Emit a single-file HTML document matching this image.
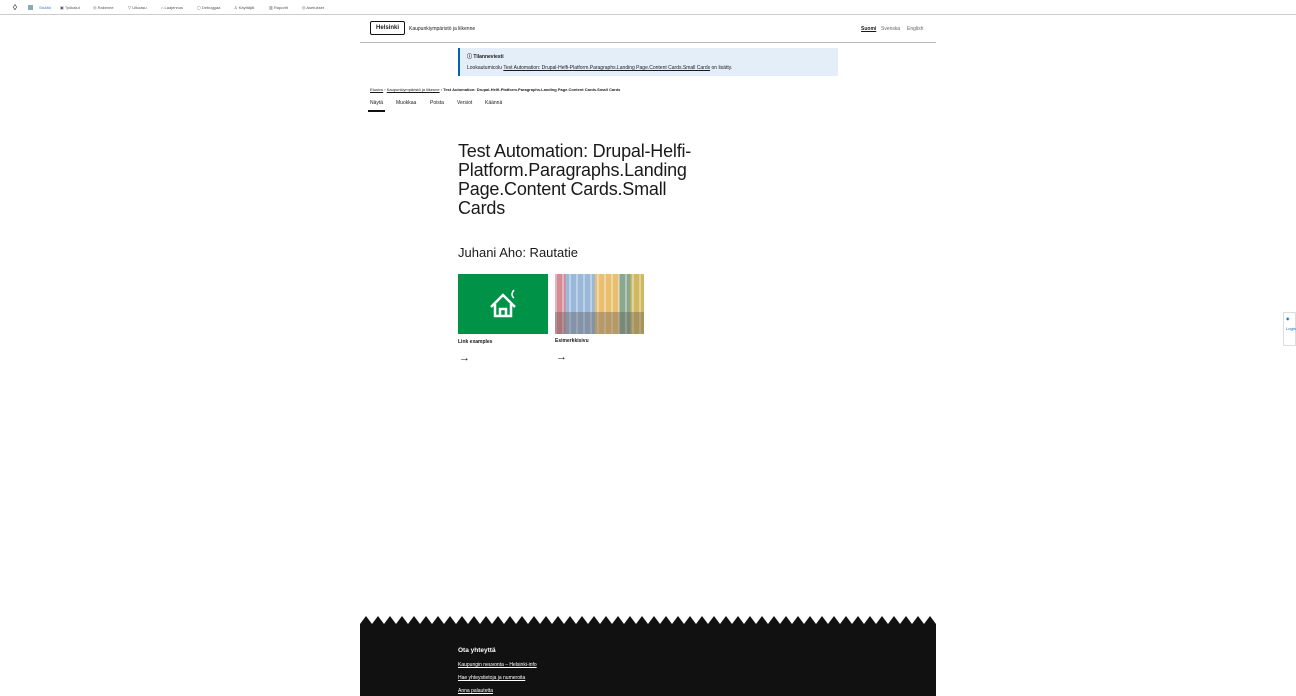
<!DOCTYPE html>
<html><head><meta charset="utf-8"><style>
*{margin:0;padding:0;box-sizing:border-box}
body{width:1296px;height:696px;overflow:hidden;background:#fff;font-family:"Liberation Sans",sans-serif;color:#1a1a1a;position:relative}
.tb{position:absolute;left:0;top:0;width:1296px;height:15px;border-bottom:1px solid #ccc;font-size:4px;color:#555}
.tb span{position:absolute;top:5px}
.hdr{position:absolute;left:360px;top:15px;width:576px;height:28px;border-bottom:1px solid #bbb}
.logo{position:absolute;left:10px;top:6px;width:35px;height:14px;border:1.3px solid #111;border-radius:2px;font-size:6px;font-weight:bold;text-align:center;line-height:12px}
.a{position:absolute;font-size:5px}
.msg{position:absolute;left:458px;top:48px;width:380px;height:28px;background:#e4eef8;border-left:2px solid #0062b9}
u{text-decoration:underline}
h1{position:absolute;left:458px;top:142px;width:255px;font-size:18px;font-weight:normal;line-height:19px;letter-spacing:-0.2px}
h2{position:absolute;left:458px;top:245px;font-size:13px;font-weight:normal}
.ft{position:absolute;left:360px;top:626px;width:576px;height:70px;background:#111}
.ft .a{color:#fff}
</style></head><body>
<div class="tb">
<span style="left:13px;top:3px;font-size:8px;color:#000">◊</span>
<span style="left:28px;width:5px;height:5px;background:#8ab;top:5px"></span>
<span style="left:39px;color:#4a7bd0">Sisältö</span>
<span style="left:60px">▣ Työkalut</span><span style="left:93px">◎ Rakenne</span><span style="left:128px">▽ Ulkoasu</span><span style="left:161px">⌂ Laajennus</span><span style="left:197px">▢ Debuggaa</span><span style="left:234px">♙ Käyttäjät</span><span style="left:269px">▥ Raportit</span><span style="left:302px">◎ Asetukset</span>
</div>
<div class="hdr">
<div class="logo">Helsinki</div>
<div class="a" style="left:49px;top:11px">Kaupunkiympäristö ja liikenne</div>
<div class="a" style="left:501px;top:11px;font-weight:bold;text-decoration:underline">Suomi</div>
<div class="a" style="left:521px;top:11px;color:#666">Svenska</div>
<div class="a" style="left:547px;top:11px;color:#666">English</div>
</div>
<div class="msg">
<div class="a" style="left:7px;top:5px;font-weight:bold">ⓘ Tilanneviesti</div>
<div class="a" style="left:7px;top:17px">Lookautumicolu <u>Test Automation: Drupal-Helfi-Platform.Paragraphs.Landing Page.Content Cards.Small Cards</u> on lisätty.</div>
</div>
<div class="a" style="left:370px;top:87px;font-size:4px"><u>Etusivu</u> › <u>Kaupunkiympäristö ja liikenne</u> › <b>Test Automation: Drupal-Helfi-Platform.Paragraphs.Landing Page.Content Cards.Small Cards</b></div>
<div class="a" style="left:370px;top:100px">Näytä</div>
<div style="position:absolute;left:368px;top:110px;width:17px;height:2px;background:#111"></div>
<div class="a" style="left:396px;top:100px">Muokkaa</div>
<div class="a" style="left:430px;top:100px">Poista</div>
<div class="a" style="left:457px;top:100px">Versiot</div>
<div class="a" style="left:485px;top:100px">Käännä</div>
<h1>Test Automation: Drupal-Helfi-Platform.Paragraphs.Landing Page.Content Cards.Small Cards</h1>
<h2>Juhani Aho: Rautatie</h2>
<div style="position:absolute;left:458px;top:274px;width:90px;height:60px;background:#009246">
<svg width="90" height="60"><g fill="none" stroke="#fff" stroke-width="2.5"><path d="M33 33 L45 21 L57 33"/><path d="M37 30 V42 H53 V30"/><path d="M42 42 V35 H48 V42"/><path d="M56 16 Q52 21 56 24" stroke-width="1.5"/></g></svg></div>
<div style="position:absolute;left:555px;top:274px;width:89px;height:60px;background:linear-gradient(90deg,#d68a96 0 12%,#9ab8d8 12% 45%,#e8c070 45% 72%,#8aa890 72% 85%,#d0b860 85%)">
<div style="position:absolute;left:0;top:0;width:89px;height:60px;background:repeating-linear-gradient(90deg,rgba(255,255,255,.35) 0 2px,transparent 2px 7px)"></div>
<div style="position:absolute;left:0;top:38px;width:89px;height:22px;background:rgba(90,80,80,.35)"></div></div>
<div class="a" style="left:458px;top:339px;font-weight:bold">Link examples</div>
<div class="a" style="left:555px;top:338px;font-weight:bold">Esimerkkisivu</div>
<div style="position:absolute;left:459px;top:352px;font-size:11px">→</div>
<div style="position:absolute;left:556px;top:351px;font-size:11px">→</div>
<div style="position:absolute;left:1283px;top:312px;width:13px;height:34px;border:1px solid #ddd;background:#fff;font-size:4px;color:#0062b9;padding-top:3px;padding-left:2px">◉<br><br>Login</div>
<svg style="position:absolute;left:360px;top:614px" width="576" height="13"><path d="M0 13 L0 10 L6 2 L12 10 L18 2 L24 10 L30 2 L36 10 L42 2 L48 10 L54 2 L60 10 L66 2 L72 10 L78 2 L84 10 L90 2 L96 10 L102 2 L108 10 L114 2 L120 10 L126 2 L132 10 L138 2 L144 10 L150 2 L156 10 L162 2 L168 10 L174 2 L180 10 L186 2 L192 10 L198 2 L204 10 L210 2 L216 10 L222 2 L228 10 L234 2 L240 10 L246 2 L252 10 L258 2 L264 10 L270 2 L276 10 L282 2 L288 10 L294 2 L300 10 L306 2 L312 10 L318 2 L324 10 L330 2 L336 10 L342 2 L348 10 L354 2 L360 10 L366 2 L372 10 L378 2 L384 10 L390 2 L396 10 L402 2 L408 10 L414 2 L420 10 L426 2 L432 10 L438 2 L444 10 L450 2 L456 10 L462 2 L468 10 L474 2 L480 10 L486 2 L492 10 L498 2 L504 10 L510 2 L516 10 L522 2 L528 10 L534 2 L540 10 L546 2 L552 10 L558 2 L564 10 L570 2 L576 10 L576 13 Z" fill="#111"/></svg>
<div class="ft">
<div class="a" style="left:98px;top:21px;font-size:6.5px;font-weight:bold">Ota yhteyttä</div>
<div class="a" style="left:98px;top:36px;text-decoration:underline">Kaupungin neuvonta – Helsinki-info</div>
<div class="a" style="left:98px;top:49px;text-decoration:underline">Hae yhteystietoja ja numeroita</div>
<div class="a" style="left:98px;top:62px;text-decoration:underline">Anna palautetta</div>
</div>
</body></html>
